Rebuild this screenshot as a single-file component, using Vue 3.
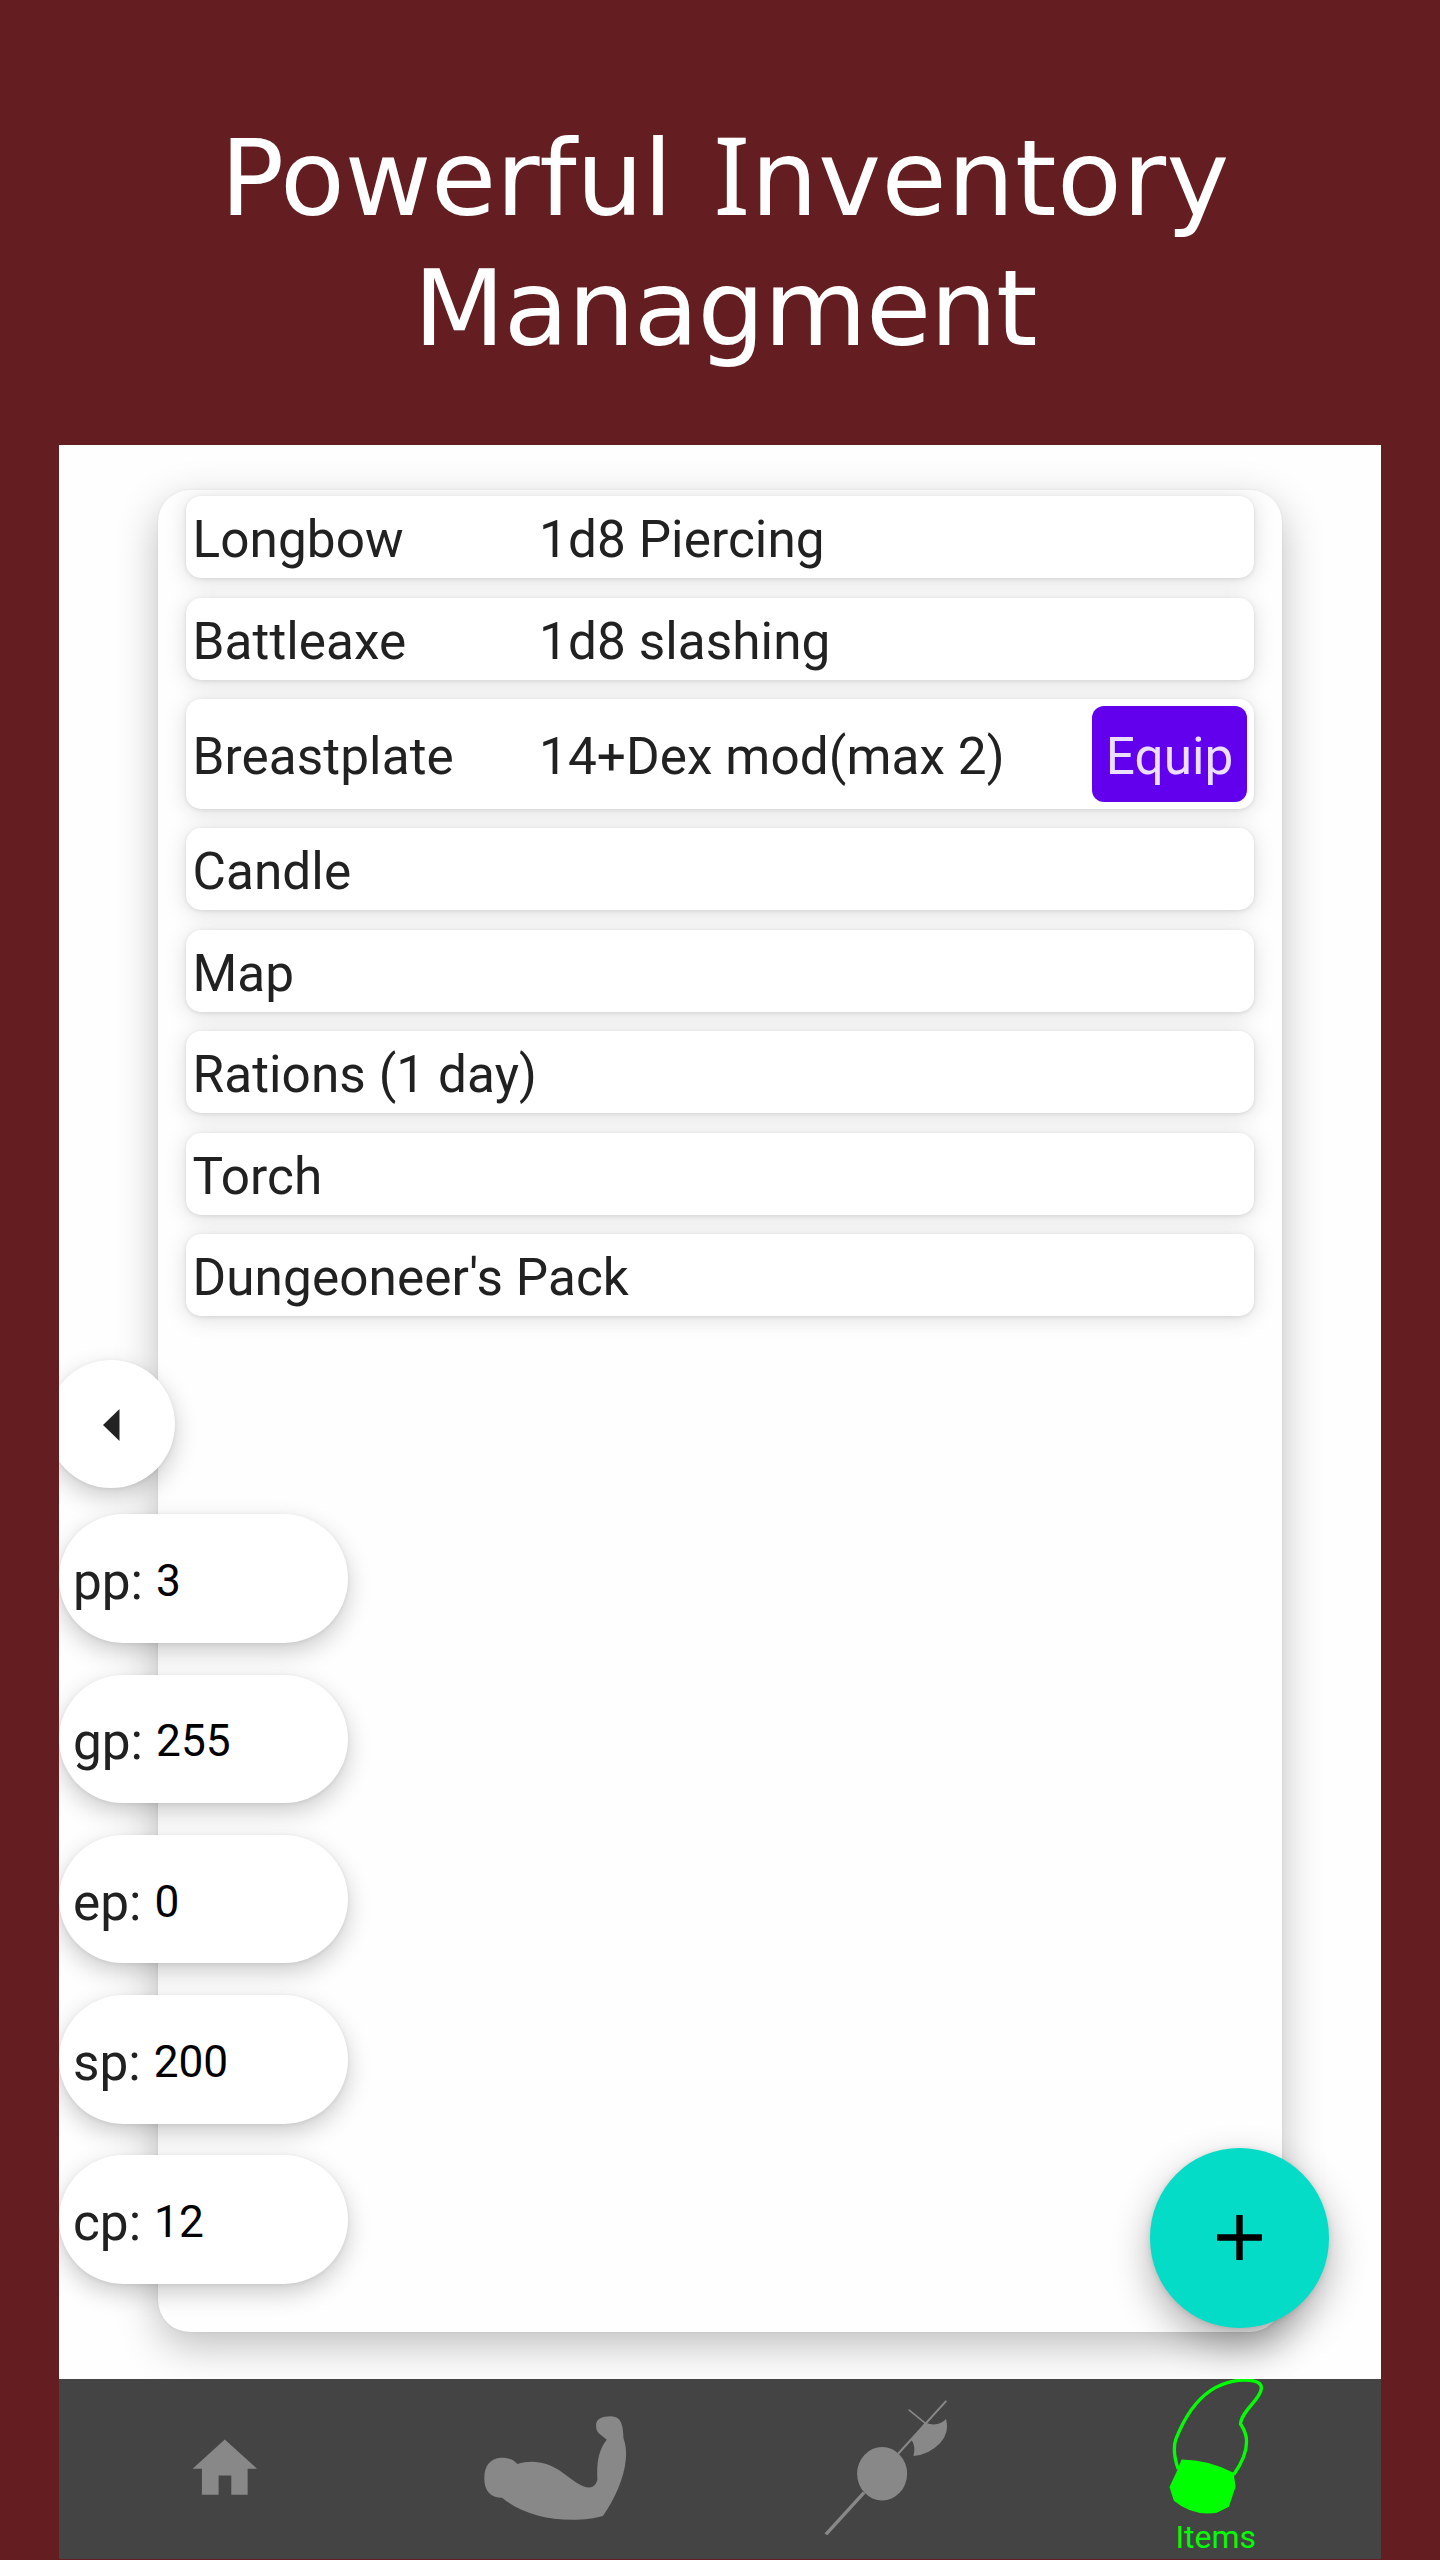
<script setup>
const items = [
  { name: 'Longbow', detail: '1d8 Piercing' },
  { name: 'Battleaxe', detail: '1d8 slashing' },
  { name: 'Breastplate', detail: '14+Dex mod(max 2)', equip: true },
  { name: 'Candle' },
  { name: 'Map' },
  { name: 'Rations (1 day)' },
  { name: 'Torch' },
  { name: "Dungeoneer's Pack" },
]

const coins = [
  { unit: 'pp', amount: 3 },
  { unit: 'gp', amount: 255 },
  { unit: 'ep', amount: 0 },
  { unit: 'sp', amount: 200 },
  { unit: 'cp', amount: 12 },
]
</script>

<template>
  <div class="page">
    <h1 class="title">
      <span class="line wide"><span class="snug">Powerful</span> <span class="cap">I</span>nventory</span>
      <span class="line tight">Managment</span>
    </h1>

    <div class="screen">
      <main class="content">
        <section class="panel">
          <div v-for="item in items" :key="item.name" class="item" :class="{ tall: item.equip }">
            <span class="name">{{ item.name }}</span>
            <span class="detail">{{ item.detail }}</span>
            <button v-if="item.equip" class="equip">Equip</button>
          </div>
        </section>

        <aside class="purse">
          <button class="collapse" aria-label="Collapse">
            <svg viewBox="0 0 17 32"><path d="M0 16 16.5 0V32Z" fill="#222" /></svg>
          </button>
          <div v-for="coin in coins" :key="coin.unit" class="coin">
            <span class="unit">{{ coin.unit }}:</span>
            <span class="amount">{{ coin.amount }}</span>
          </div>
        </aside>

        <button class="fab" aria-label="Add item">
          <svg viewBox="0 0 45 45"><path d="M22.5 0V45M0 22.5H45" stroke="#000" stroke-width="6.4" /></svg>
        </button>
      </main>

      <nav class="tabs">
        <a class="tab">
          <svg viewBox="-301.5 28.5 990.75 538.5">
            <path fill="#888" d="M195.500 209 292 297H264V375H215V317H177V375H127V297H99Z" />
          </svg>
        </a>
        <a class="tab">
          <svg viewBox="689.25 28.500 990.75 538.5">
            <path
              fill="#888"
              d="M1071 283C1062 270 1045 264 1022 264C990 266 972 288 972 324C971 362 990 384 1025 384C1080 428 1155 450 1235 450C1270 450 1305 446 1328 438C1360 392 1392 325 1396 270C1399 245 1395 222 1389 205C1389 165 1380 140 1356 140C1325 139 1307 148 1307 166C1307 186 1312 189 1339 210C1315 238 1308 280 1311 330C1307 342 1301 353 1287 353C1262 353 1240 332 1206 308C1160 275 1115 269 1071 283Z"
            />
          </svg>
        </a>
        <a class="tab">
          <svg viewBox="-210 28.5 990.75 538.5">
            <g fill="#888" stroke="#888">
              <path d="M103 491 218 365 226 371 112 496Z" stroke="none" />
              <path d="M324 252 467 95" stroke-width="6" stroke-linecap="round" />
              <path d="M357 121 405 160" stroke-width="5" stroke-linecap="round" />
              <path
                stroke="none"
                d="M405 158Q442 174 468 148Q478 190 450 220Q417 255 370 259Q378 228 363 209Z"
              />
              <ellipse cx="276" cy="312" rx="75" ry="80" stroke="none" />
            </g>
          </svg>
        </a>
        <a class="tab active">
          <svg viewBox="-239.25 58.5 990.75 538.5">
            <path
              fill="none"
              stroke="#0f0"
              stroke-width="10"
              d="M142 328C129 290 128 260 135 238C160 175 195 122 240 92C280 66 330 56 370 64C387 68 393 76 391 88C388 120 330 155 329 193C342 212 347 225 347 246C347 282 328 317 308 345"
            />
            <path
              fill="#0f0"
              d="M152 299Q235 300 308 339L314 381 294 441 258 459Q185 470 129 423L116 382 140 330Z"
            />
          </svg>
          <span class="label">Items</span>
        </a>
      </nav>
    </div>
  </div>
</template>

<style>
body {
  margin: 0;
}
</style>

<style scoped>
.page {
  box-sizing: border-box;
  width: 1440px;
  height: 2560px;
  padding: 0 59px 1px;
  display: flex;
  flex-direction: column;
  overflow: hidden;
  background: #641d21;
  font-family: Roboto, sans-serif;
}

.title {
  box-sizing: border-box;
  height: 445px;
  flex: none;
  margin: 0;
  padding: 114px 0 0 10px;
  text-align: center;
  color: #fff;
  font: 400 106px/130px 'DejaVu Sans', sans-serif;
  white-space: nowrap;
}

.line {
  display: block;
}

.wide {
  letter-spacing: 0.5px;
  word-spacing: 7px;
}

.snug {
  letter-spacing: -0.3px;
}

.tight {
  letter-spacing: -1.1px;
}

.cap {
  font-family: 'Noto Sans', sans-serif;
  font-size: 108px;
  line-height: 1px;
}

.screen {
  flex: 1;
  display: flex;
  flex-direction: column;
  background: #fefefe;
  overflow: hidden;
}

.content {
  position: relative;
  box-sizing: border-box;
  height: 1934px;
  flex: none;
  padding: 45px 99px 47.5px;
  overflow: hidden;
}

.panel {
  box-sizing: border-box;
  height: 100%;
  padding: 6px 28px;
  display: flex;
  flex-direction: column;
  gap: 19.5px;
  border-radius: 32px;
  overflow: hidden;
  background: #fefefe;
  box-shadow:
    0 14px 42px rgba(0, 0, 0, 0.25),
    0 0 3px rgba(0, 0, 0, 0.06);
}

.item {
  box-sizing: border-box;
  height: 82px;
  flex: none;
  display: flex;
  align-items: center;
  padding: 0 7px 0 6.5px;
  border-radius: 15px;
  background: #fff;
  color: #212121;
  font-size: 51.3px;
  letter-spacing: 0.08px;
  white-space: nowrap;
  box-shadow:
    0 3px 22px rgba(0, 0, 0, 0.13),
    0 1px 4px rgba(0, 0, 0, 0.1);
}

.item.tall {
  height: 109.5px;
}

.name {
  width: 346.5px;
  flex: none;
  padding-top: 5px;
}

.detail {
  flex: 1;
  padding-top: 5px;
}

button {
  border: 0;
  padding: 0;
  font: inherit;
}

.equip {
  width: 155px;
  height: 96px;
  border-radius: 12px;
  background: #6200ee;
  color: #ecdffd;
  padding-top: 5px;
}

.purse {
  position: absolute;
  left: 0;
  top: 915px;
  display: flex;
  flex-direction: column;
  gap: 31.9px;
}

.collapse,
.coin {
  height: 128.4px;
  background: #fff;
  box-shadow:
    0 9px 24px rgba(0, 0, 0, 0.2),
    0 1px 4px rgba(0, 0, 0, 0.08);
}

.collapse {
  width: 128.4px;
  margin: 0 0 -6px -12px;
  padding-top: 2px;
  border-radius: 50%;
  display: flex;
  align-items: center;
  justify-content: center;
}

.collapse svg {
  width: 17px;
  height: 32px;
}

.coin {
  box-sizing: border-box;
  width: 289px;
  padding: 6px 0 0 14px;
  border-radius: 64.2px;
  display: flex;
  align-items: center;
  color: #212121;
}

.unit {
  font-size: 51.3px;
}

.amount {
  margin: 0 0 1px 13px;
  font-size: 44.2px;
  color: #000;
}

.fab {
  position: absolute;
  left: 1090.5px;
  top: 1703px;
  width: 179.5px;
  height: 179.5px;
  border-radius: 50%;
  display: flex;
  align-items: center;
  justify-content: center;
  background: #04dcc8;
  box-shadow:
    0 16px 38px rgba(0, 0, 0, 0.3),
    0 1px 6px rgba(0, 0, 0, 0.12);
}

.fab svg {
  width: 45px;
  height: 45px;
}

.tabs {
  flex: 1;
  display: flex;
  background: #444;
}

.tab {
  position: relative;
  flex: 1;
  height: 180px;
}

.tab svg {
  display: block;
  width: 100%;
  height: 100%;
}

.label {
  position: absolute;
  left: 0;
  right: 0;
  bottom: 3.5px;
  text-align: center;
  color: #0f0;
  font-size: 32px;
  line-height: 38px;
}
</style>
